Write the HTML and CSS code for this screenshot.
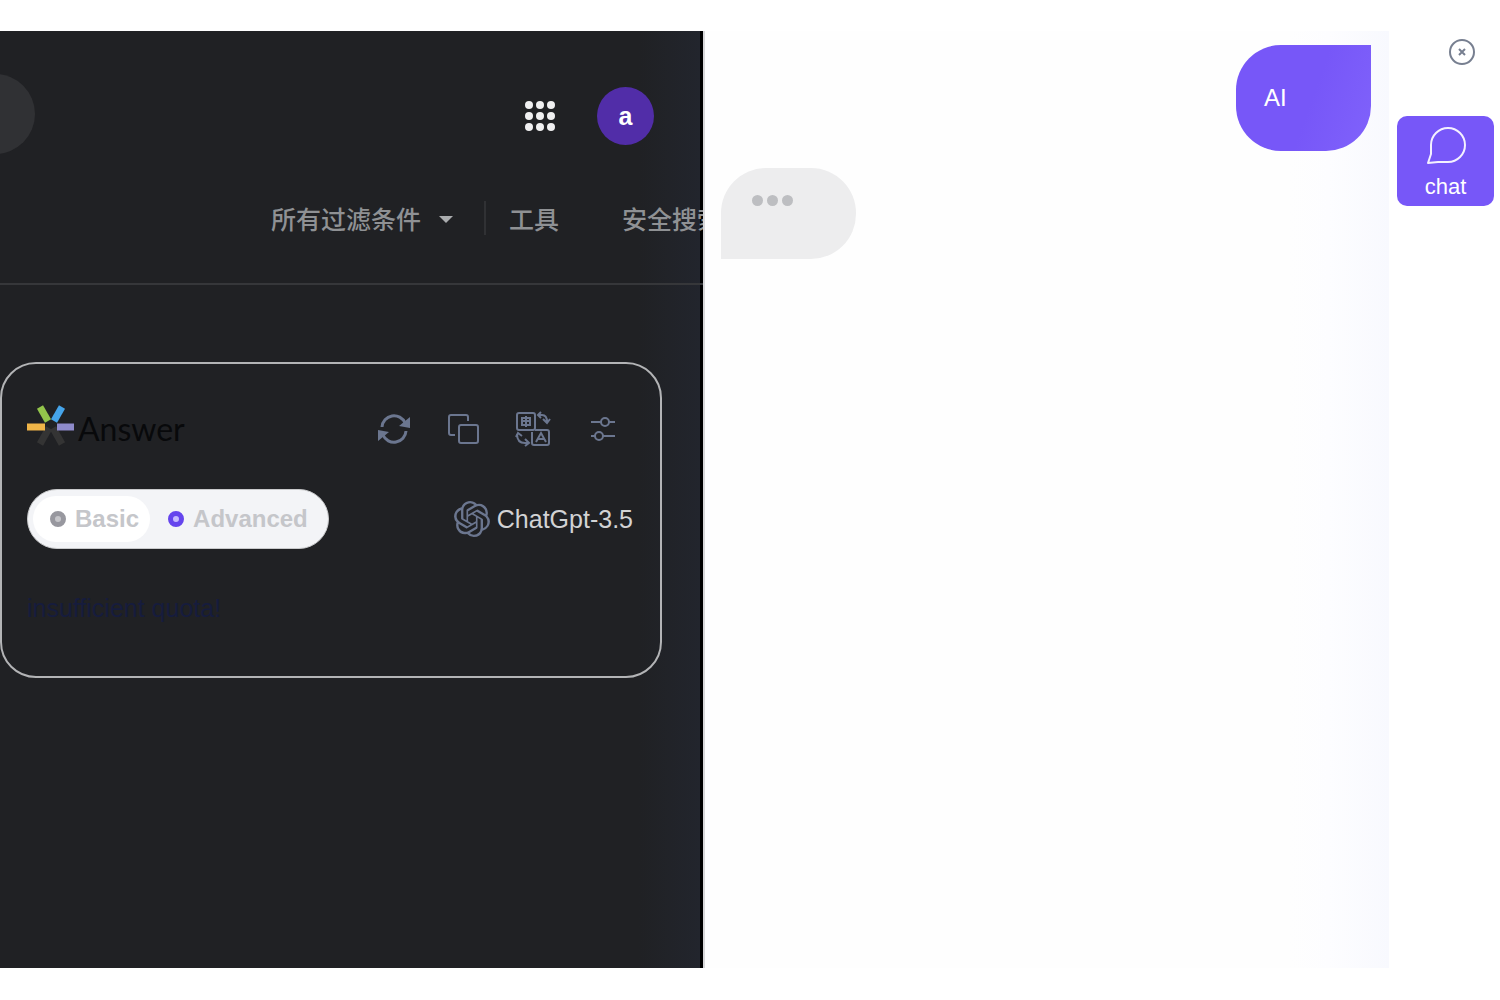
FILE: index.html
```html
<!DOCTYPE html>
<html lang="zh-CN">
<head>
<meta charset="utf-8">
<meta name="viewport" content="width=device-width, initial-scale=1">
<title>AI Answer</title>
<link rel="stylesheet" href="styles.css">
</head>
<body>
<div class="app">
  <main class="search">
    <header class="topbar">
      <div class="search-end"></div>
      <div class="account">
        <button class="icon-btn" type="button" aria-label="Apps">
          <svg width="32" height="32" viewBox="0 0 32 32" fill="#f0f0f1"><circle cx="5" cy="5" r="4"/><circle cx="16" cy="5" r="4"/><circle cx="27" cy="5" r="4"/><circle cx="5" cy="16" r="4"/><circle cx="16" cy="16" r="4"/><circle cx="27" cy="16" r="4"/><circle cx="5" cy="27" r="4"/><circle cx="16" cy="27" r="4"/><circle cx="27" cy="27" r="4"/></svg>
        </button>
        <button class="avatar" type="button">a</button>
      </div>
    </header>
    <nav class="filters">
      <button class="filter" type="button">所有过滤条件<span class="caret"></span></button>
      <span class="divider"></span>
      <button class="filter tools" type="button">工具</button>
      <button class="filter" type="button">安全搜索</button>
    </nav>
    <section class="card">
      <div class="card-head">
        <div class="brand">
          <svg width="48" height="42" viewBox="0 0 48 42" stroke-width="7"><path d="M22 23 13 39M26 23l9 16" stroke="#343434"/><path d="M0 22h18" stroke="#f0b548"/><path d="M30 22h17" stroke="#8f8bcb"/><path d="M13 2l8 14" stroke="#93c54b"/><path d="M35 2l-8 14" stroke="#45a4ea"/></svg>
          <h1 class="brand-name">Answer</h1>
        </div>
        <div class="actions">
          <button class="icon-btn" type="button" aria-label="Refresh">
            <svg class="line" width="34" height="34" viewBox="0 0 34 34" stroke-width="3"><path d="M5 15A12 12 0 0 1 28 11M29 19A12 12 0 0 1 6 23"/><path d="M33 5v11l-11-2zM1 29V18l11 2z" fill="#6b768f" stroke="none"/></svg>
          </button>
          <button class="icon-btn" type="button" aria-label="Copy">
            <svg class="line" width="34" height="34" viewBox="0 0 34 34" stroke-width="2"><rect x="13" y="13" width="19" height="18" rx="2"/><path d="M9 23H5q-2 0-2-2V5q0-2 2-2h15q2 0 2 2v4"/></svg>
          </button>
          <button class="icon-btn" type="button" aria-label="Translate">
            <svg class="line" width="36" height="36" viewBox="0 0 36 36" stroke-width="2"><rect x="2" y="2" width="18" height="17" rx="2"/><path d="M7 7h8v7H7zM7 10h8M11 5v11"/><path d="M20 19h12q2 0 2 2v11q0 2-2 2H19q-2 0-2-2V21"/><path d="M21 31l5-9 5 9M23 28h6"/><path d="M24 4h3q5 0 5 7M28 8l4 4 3-4M26 1l-3 3 3 3M2 23q0 9 8 9h3M1 26l2-4 4 3M10 28l4 4-4 3"/></svg>
          </button>
          <button class="icon-btn" type="button" aria-label="Settings">
            <svg class="line" width="34" height="34" viewBox="0 0 34 34" stroke-width="2"><path d="M5 10h10M23 10h6M5 24h4M17 24h12"/><circle cx="19" cy="10" r="4"/><circle cx="13" cy="24" r="4"/></svg>
          </button>
        </div>
      </div>
      <div class="model-row">
        <div class="modes" role="radiogroup" aria-label="Mode">
          <label class="mode current"><input class="dot" type="radio" name="mode" checked>Basic</label>
          <label class="mode"><input class="dot violet" type="radio" name="mode">Advanced</label>
        </div>
        <div class="model">
          <svg width="36" height="38" viewBox="0 0 24 24" fill="#6b768f"><path d="M22.28 9.82a5.98 5.98 0 0 0-.52-4.91 6.05 6.05 0 0 0-6.51-2.9A6.07 6.07 0 0 0 4.98 4.18a5.98 5.98 0 0 0-4 2.9 6.05 6.05 0 0 0 .74 7.1 5.98 5.98 0 0 0 .51 4.91 6.05 6.05 0 0 0 6.51 2.9A5.98 5.98 0 0 0 13.26 24a6.06 6.06 0 0 0 5.77-4.21 5.99 5.99 0 0 0 4-2.9 6.06 6.06 0 0 0-.75-7.07zM13.26 22.43a4.48 4.48 0 0 1-2.88-1.04l.14-.08 4.78-2.76a.8.8 0 0 0 .39-.68v-6.74l2.02 1.17a.07.07 0 0 1 .04.05v5.58a4.5 4.5 0 0 1-4.49 4.5zM3.6 18.3a4.47 4.47 0 0 1-.54-3.01l.14.09 4.78 2.76a.77.77 0 0 0 .78 0l5.84-3.37v2.33a.08.08 0 0 1-.03.06L9.74 19.95A4.5 4.5 0 0 1 3.6 18.3zM2.34 7.9a4.49 4.49 0 0 1 2.37-1.97v5.67a.77.77 0 0 0 .39.68l5.81 3.35-2.02 1.17a.08.08 0 0 1-.07 0l-4.83-2.79A4.5 4.5 0 0 1 2.34 7.9zm16.6 3.85L13.1 8.36l2.02-1.16a.08.08 0 0 1 .07 0l4.83 2.79a4.49 4.49 0 0 1-.68 8.1v-5.67a.79.79 0 0 0-.4-.67zm2.01-3.02-.14-.09-4.77-2.78a.78.78 0 0 0-.79 0L9.41 9.23V6.9a.07.07 0 0 1 .03-.06l4.83-2.79a4.5 4.5 0 0 1 6.68 4.66zM8.31 12.86l-2.02-1.16a.08.08 0 0 1-.04-.06V6.07a4.5 4.5 0 0 1 7.38-3.45l-.14.08L8.7 5.46a.8.8 0 0 0-.39.68zm1.1-2.37L12 9l2.61 1.5v3L12 15l-2.6-1.5z"/></svg>
          <span>ChatGpt-3.5</span>
        </div>
      </div>
      <p class="notice">insufficient quota!</p>
    </section>
  </main>
  <section class="chat">
    <div class="bubble mine">AI</div>
    <div class="bubble reply" role="status" aria-label="Typing"><i></i><i></i><i></i></div>
  </section>
  <aside class="rail">
    <button class="icon-btn close" type="button" aria-label="Close">
      <svg width="28" height="28" viewBox="0 0 28 28" fill="none" stroke="#777f90" stroke-width="2"><circle cx="14" cy="14" r="12"/><path d="M11 11l6 6M17 11l-6 6"/></svg>
    </button>
    <button class="chat-tab" type="button">
      <svg width="42" height="42" viewBox="0 0 42 42" fill="none" stroke="#f4f1ff" stroke-width="2" stroke-linejoin="round"><path d="M3 38l3-9V20A17 17 0 1 1 23 37H13z"/></svg>
      chat
    </button>
  </aside>
</div>
</body>
</html>
```
FILE: styles.css
```css
* { box-sizing: border-box; }
body {
  margin: 0;
  background: #fff;
  font-family: "Liberation Sans", "Noto Sans CJK SC", sans-serif;
  font-size: 25px;
}
button {
  margin: 0;
  padding: 0;
  border: 0;
  background: none;
  color: inherit;
  font: inherit;
  cursor: pointer;
}
svg { display: block; flex: none; }
.app {
  display: grid;
  grid-template-columns: 47% 1fr 111px;
  min-height: 100vh;
  padding: 31px 0 32px;
}

.search {
  min-width: 0;
  overflow: hidden;
  background: linear-gradient(to left, #000 3px, #22252d 3px, #202124 64px);
  border-right: 2px solid #d8d8da;
}
.topbar {
  display: flex;
  justify-content: space-between;
  align-items: center;
  padding: 43px 49px 0 0;
}
.search-end {
  width: 80px;
  height: 80px;
  margin-left: -45px;
  border-radius: 40px;
  background: #303134;
}
.account { display: flex; align-items: center; gap: 41px; padding-top: 4px; }
.avatar {
  width: 57px;
  height: 58px;
  border-radius: 50%;
  background: #512da8;
  color: #fff;
  font-weight: bold;
}
.filters {
  display: flex;
  align-items: center;
  height: 131px;
  padding: 0 0 2px 271px;
  border-bottom: 2px solid #36373a;
  color: #8f9194;
  white-space: nowrap;
}
.filter {
  display: flex;
  flex: none;
  align-items: center;
  font-weight: 500;
}
.caret {
  margin: 3px 0 0 18px;
  border: 7px solid transparent;
  border-top-color: #aaacae;
  border-bottom: 0;
}
.divider {
  flex: none;
  width: 2px;
  height: 34px;
  margin: 0 23px 0 31px;
  background: #303134;
}
.tools { margin-right: 63px; }

.card {
  margin: 77px 41px 0 0;
  padding: 25px 27px 52px 25px;
  border: 2px solid #b3b4b6;
  border-radius: 36px;
}
.card-head {
  display: flex;
  justify-content: space-between;
  align-items: center;
  height: 80px;
  padding-right: 13px;
}
.brand { display: flex; align-items: center; gap: 3px; }
.brand svg { margin-bottom: 6px; }
.brand-name {
  margin: 0;
  color: #08090b;
  font: 400 32px/40px Lato, sans-serif;
}
.actions { display: flex; align-items: center; gap: 35px; }
.line { fill: none; stroke: #6b768f; }
.model-row {
  display: flex;
  justify-content: space-between;
  align-items: center;
  margin-top: 20px;
}
.modes {
  display: flex;
  align-items: center;
  height: 60px;
  padding: 5px;
  border: 1px solid #c9cacc;
  border-radius: 30px;
  background: #f3f4f7;
}
.mode {
  display: flex;
  align-items: center;
  gap: 9px;
  height: 46px;
  padding: 0 15px 0 18px;
  border-radius: 23px;
  color: #c5c6ca;
  font-size: 24px;
  font-weight: bold;
}
.current { padding: 0 11px 0 17px; background: #fff; }
.dot {
  appearance: none;
  width: 16px;
  height: 16px;
  margin: 0;
  border: 5px solid #98989f;
  border-radius: 50%;
  background: #c6c6ca;
}
.violet { border-color: #6545ed; background: #c5baff; }
.model { display: flex; align-items: center; gap: 7px; color: #d2d3d5; }
.notice { margin: 43px 0 0; color: #161c3d; line-height: 32px; }

.chat {
  display: flex;
  flex-direction: column;
  gap: 17px;
  padding: 14px 18px 14px 16px;
  background: linear-gradient(to left, #f8f9fe, #fdfdff 60px, #fefefe 100px);
}
.bubble { width: 135px; font-size: 24px; }
.mine {
  align-self: flex-end;
  padding: 36px 28px;
  border-radius: 45px 0 45px 45px;
  background: linear-gradient(110deg, #7757f8 55%, #8062fb);
  color: #fff;
  line-height: 34px;
}
.reply {
  display: flex;
  gap: 4px;
  height: 91px;
  padding: 27px 31px;
  border-radius: 45px 45px 45px 0;
  background: #ededee;
}
.reply i { width: 11px; height: 11px; border-radius: 50%; background: #bdbec1; }

.rail {
  display: flex;
  flex-direction: column;
  gap: 50px;
  padding: 7px 6px 0 8px;
}
.close { align-self: flex-end; margin-right: 18px; }
.chat-tab {
  display: flex;
  flex-direction: column;
  align-items: center;
  height: 90px;
  padding-top: 9px;
  border-radius: 10px;
  background: #7757f8;
  color: #fff;
  font-size: 22px;
  line-height: 40px;
}
```
